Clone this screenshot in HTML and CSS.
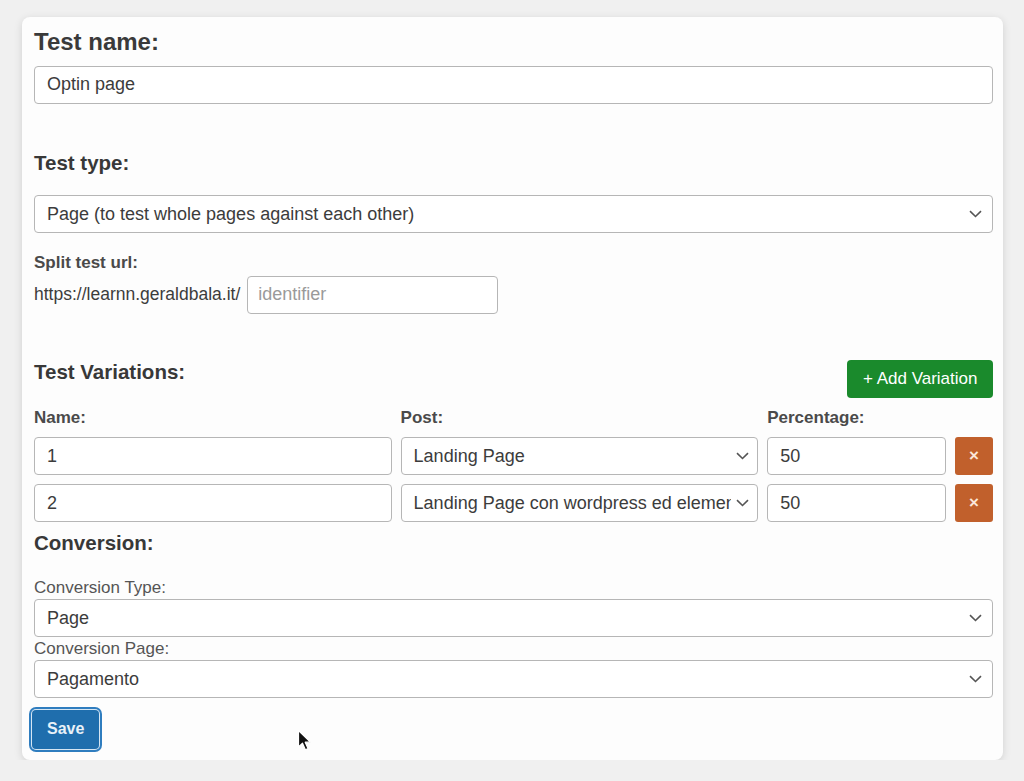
FILE: index.html
```html
<!DOCTYPE html>
<html lang="en">
<head>
    <meta charset="UTF-8">
    <meta name="viewport" content="width=device-width, initial-scale=1.0">
    <title>Split Test</title>
    <link rel="stylesheet" href="styles.css">
</head>
<body>
    <div class="card">
        <h2 class="title">Test name:</h2>
        <input type="text" class="field" value="Optin page">

        <h3 class="section gap-big">Test type:</h3>
        <div class="select-wrap">
            <select class="field">
                <option>Page (to test whole pages against each other)</option>
            </select>
            <svg class="chevron" width="13" height="8" viewBox="0 0 13 8"><path d="M1 1.2 L6.5 6.5 L12 1.2" fill="none" stroke="#555" stroke-width="1.6"/></svg>
        </div>

        <label class="label url-label">Split test url:</label>
        <div class="url-row">
            <span class="url-base">https://learnn.geraldbala.it/</span>
            <input type="text" class="field small" placeholder="identifier">
        </div>

        <div class="var-head">
            <h3 class="section">Test Variations:</h3>
            <button class="btn-add">+ Add Variation</button>
        </div>

        <div class="var-grid">
            <span class="label">Name:</span>
            <span class="label">Post:</span>
            <span class="label">Percentage:</span>
            <span></span>

            <input type="text" class="field" value="1">
            <div class="select-wrap">
                <select class="field">
                    <option>Landing Page</option>
                </select>
                <svg class="chevron narrow" width="13" height="8" viewBox="0 0 13 8"><path d="M1 1.2 L6.5 6.5 L12 1.2" fill="none" stroke="#555" stroke-width="1.6"/></svg>
            </div>
            <input type="text" class="field" value="50">
            <button class="btn-remove">×</button>

            <input type="text" class="field" value="2">
            <div class="select-wrap">
                <select class="field">
                    <option>Landing Page con wordpress ed elementor</option>
                </select>
                <svg class="chevron narrow" width="13" height="8" viewBox="0 0 13 8"><path d="M1 1.2 L6.5 6.5 L12 1.2" fill="none" stroke="#555" stroke-width="1.6"/></svg>
            </div>
            <input type="text" class="field" value="50">
            <button class="btn-remove">×</button>
        </div>

        <h3 class="section conv-head">Conversion:</h3>
        <label class="sub-label first">Conversion Type:</label>
        <div class="select-wrap">
            <select class="field">
                <option>Page</option>
            </select>
            <svg class="chevron" width="13" height="8" viewBox="0 0 13 8"><path d="M1 1.2 L6.5 6.5 L12 1.2" fill="none" stroke="#555" stroke-width="1.6"/></svg>
        </div>
        <label class="sub-label">Conversion Page:</label>
        <div class="select-wrap">
            <select class="field">
                <option>Pagamento</option>
            </select>
            <svg class="chevron" width="13" height="8" viewBox="0 0 13 8"><path d="M1 1.2 L6.5 6.5 L12 1.2" fill="none" stroke="#555" stroke-width="1.6"/></svg>
        </div>

        <button class="btn-save">Save</button>
    </div>

    <!-- mouse pointer from the capture -->
    <svg class="cursor" width="16" height="24" viewBox="0 0 16 24">
        <path d="M1.5 1.5 L1.5 18 L5.5 14.2 L8.4 20.8 L11 19.6 L8.2 13.2 L13.6 13.2 Z" fill="#111" stroke="#fff" stroke-width="1.2" stroke-linejoin="round"/>
    </svg>
</body>
</html>
```

FILE: styles.css
```css
body {
    font-family: "Liberation Sans", Arial, sans-serif;
    margin: 0;
    padding: 17px 21px 0 22px;
    background-color: #f0f0f0;
    color: #3c3c3c;
}
.card {
    background: #fdfdfd;
    border-radius: 8px;
    box-shadow: 0 2px 8px rgba(0,0,0,0.13);
    padding: 11px 10px 11px 12px;
}
.title {
    font-size: 24px;
    line-height: 1.2;
    font-weight: bold;
    margin: 0 0 9px;
    color: #3a3a3a;
}
.section {
    font-size: 20.5px;
    line-height: 1.2;
    font-weight: bold;
    margin: 0;
    color: #383838;
}
.gap-big {
    margin: 47px 0 20px;
}
.field {
    display: block;
    box-sizing: border-box;
    width: 100%;
    height: 38px;
    margin: 0;
    padding: 0 12px;
    font-family: inherit;
    font-size: 18px;
    color: #3c3c3c;
    background: #fff;
    border: 1px solid #b6b6b6;
    border-radius: 4px;
    outline: none;
}
.field::placeholder {
    color: #9a9a9a;
}
select.field {
    appearance: none;
    -webkit-appearance: none;
    padding-right: 26px;
}
.select-wrap {
    position: relative;
}
.chevron {
    position: absolute;
    right: 11px;
    top: 15px;
    pointer-events: none;
}
.chevron.narrow {
    right: 9px;
}
.label {
    display: block;
    font-size: 17px;
    line-height: 1.2;
    font-weight: bold;
    color: #4a4a4a;
}
.url-label {
    margin: 20px 0 2px;
}
.url-row {
    display: flex;
    align-items: center;
    gap: 7px;
}
.url-base {
    font-size: 17.5px;
    color: #3c3c3c;
}
.field.small {
    width: 251px;
    padding: 0 10px;
}
.var-head {
    display: flex;
    justify-content: space-between;
    align-items: flex-start;
    margin-top: 46px;
}
.btn-add {
    height: 38px;
    padding: 0 15.5px;
    background-color: #1a8a2c;
    color: #fff;
    border: none;
    border-radius: 4px;
    font-family: inherit;
    font-size: 17px;
    cursor: pointer;
}
.var-grid {
    display: grid;
    grid-template-columns: 1fr 1fr 0.5fr 38px;
    column-gap: 9px;
    row-gap: 9px;
    margin-top: 10px;
}
.btn-remove {
    height: 38px;
    padding: 0;
    background-color: #c1602c;
    color: #fbe6da;
    border: none;
    border-radius: 3px;
    font-family: inherit;
    font-size: 17px;
    font-weight: bold;
    cursor: pointer;
}
.conv-head {
    margin-top: 9px;
}
.sub-label {
    display: block;
    font-size: 17px;
    line-height: 18px;
    color: #555;
    margin: 3px 0 2px;
}
.sub-label.first {
    margin-top: 23px;
}
.btn-save {
    display: block;
    height: 39px;
    margin: 12px 0 0 -2px;
    padding: 0 15px;
    background-color: #1f6ead;
    color: #e8f1f8;
    border: none;
    border-radius: 4px;
    box-shadow: 0 0 0 1px #d6e6f3, 0 0 0 3px #2f7dbf;
    font-family: inherit;
    font-size: 16px;
    font-weight: bold;
    cursor: pointer;
}
.cursor {
    position: absolute;
    left: 297px;
    top: 729px;
}
```
